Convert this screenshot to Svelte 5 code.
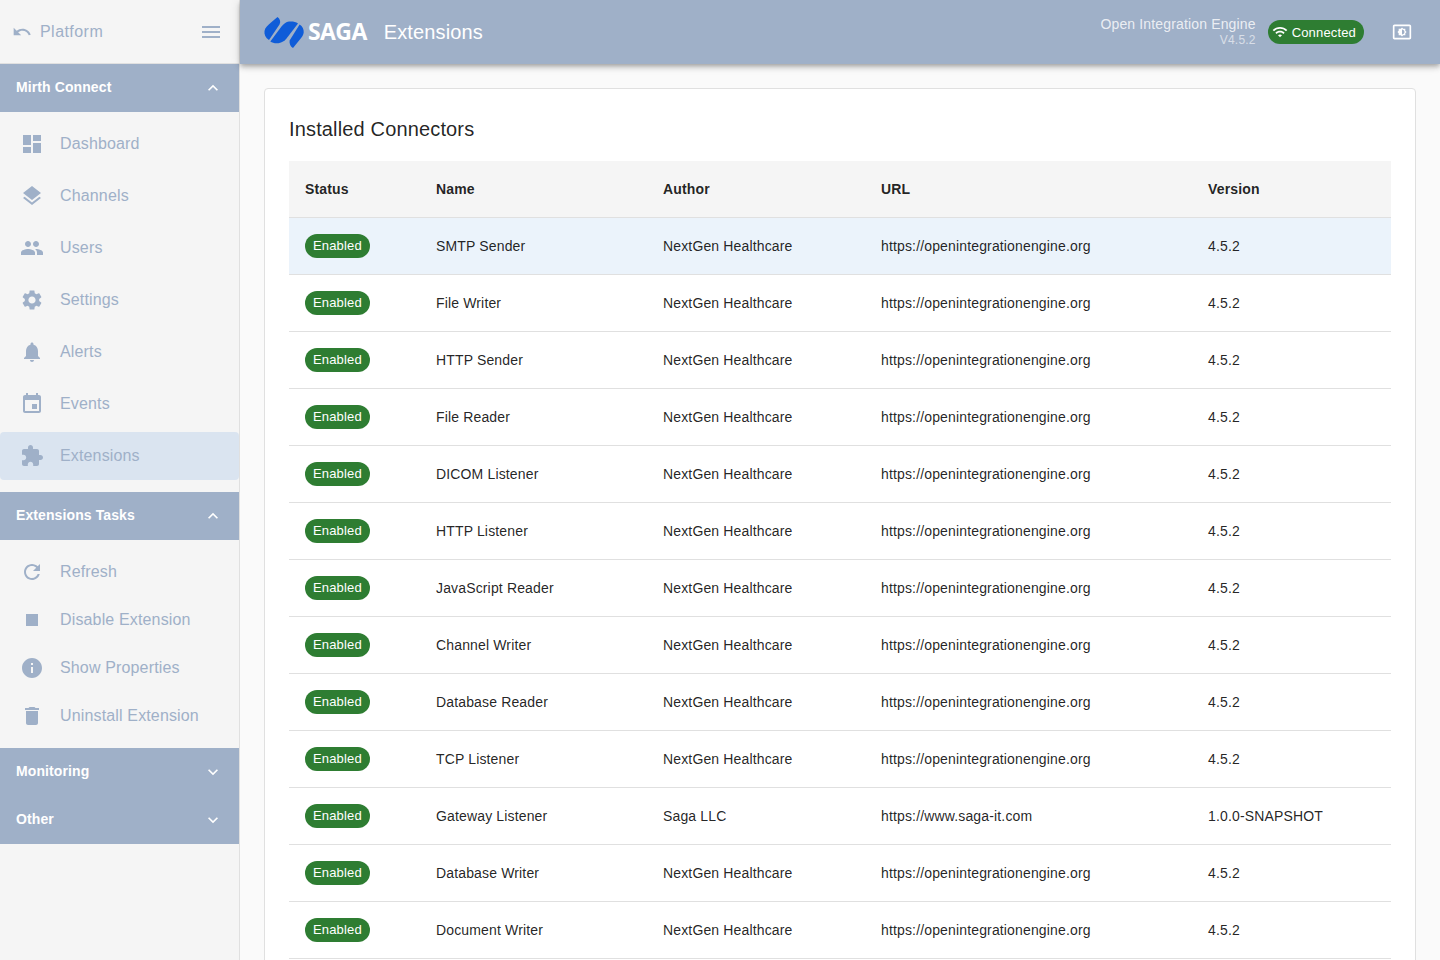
<script>
  const icons = {
    dashboard: 'M3 13h8V3H3v10zm0 8h8v-6H3v6zm10 0h8V11h-8v10zm0-18v6h8V3h-8z',
    layers: 'M11.99 18.54l-7.37-5.73L3 14.07l9 7 9-7-1.63-1.27-7.38 5.74zM12 16l7.36-5.73L21 9l-9-7-9 7 1.63 1.27L12 16z',
    people: 'M16 11c1.66 0 2.99-1.34 2.99-3S17.66 5 16 5c-1.66 0-3 1.34-3 3s1.34 3 3 3zm-8 0c1.66 0 2.99-1.34 2.99-3S9.66 5 8 5C6.34 5 5 6.34 5 8s1.34 3 3 3zm0 2c-2.33 0-7 1.17-7 3.5V19h14v-2.5c0-2.33-4.67-3.5-7-3.5zm8 0c-.29 0-.62.02-.97.05 1.16.84 1.97 1.97 1.97 3.45V19h6v-2.5c0-2.33-4.67-3.5-7-3.5z',
    settings: 'M19.14 12.94c.04-.3.06-.61.06-.94 0-.32-.02-.64-.07-.94l2.03-1.58c.18-.14.23-.41.12-.61l-1.92-3.32c-.12-.22-.37-.29-.59-.22l-2.39.96c-.5-.38-1.03-.7-1.62-.94l-.36-2.54c-.04-.24-.24-.41-.48-.41h-3.84c-.24 0-.43.17-.47.41l-.36 2.54c-.59.24-1.13.57-1.62.94l-2.39-.96c-.22-.08-.47 0-.59.22L2.74 8.87c-.12.21-.08.47.12.61l2.03 1.58c-.05.3-.09.63-.09.94s.02.64.07.94l-2.03 1.58c-.18.14-.23.41-.12.61l1.92 3.32c.12.22.37.29.59.22l2.39-.96c.5.38 1.03.7 1.62.94l.36 2.54c.05.24.24.41.48.41h3.84c.24 0 .44-.17.47-.41l.36-2.54c.59-.24 1.13-.56 1.62-.94l2.39.96c.22.08.47 0 .59-.22l1.92-3.32c.12-.22.07-.47-.12-.61l-2.01-1.58zM12 15.6c-1.98 0-3.6-1.62-3.6-3.6s1.62-3.6 3.6-3.6 3.6 1.62 3.6 3.6-1.62 3.6-3.6 3.6z',
    bell: 'M12 22c1.1 0 2-.9 2-2h-4c0 1.1.89 2 2 2zm6-6v-5c0-3.07-1.64-5.64-4.5-6.32V4c0-.83-.67-1.5-1.5-1.5s-1.5.67-1.5 1.5v.68C7.63 5.36 6 7.92 6 11v5l-2 2v1h16v-1l-2-2z',
    event: 'M17 12h-5v5h5v-5zM16 1v2H8V1H6v2H5c-1.11 0-1.99.9-1.99 2L3 19c0 1.1.89 2 2 2h14c1.1 0 2-.9 2-2V5c0-1.1-.9-2-2-2h-1V1h-2zm3 18H5V8h14v11z',
    extension: 'M20.5 11H19V7c0-1.1-.9-2-2-2h-4V3.5C13 2.12 11.88 1 10.5 1S8 2.12 8 3.5V5H4c-1.1 0-1.99.9-1.99 2v3.8H3.5c1.49 0 2.7 1.21 2.7 2.7s-1.21 2.7-2.7 2.7H2V20c0 1.1.9 2 2 2h3.8v-1.5c0-1.49 1.21-2.7 2.7-2.7 1.49 0 2.7 1.21 2.7 2.7V22H17c1.1 0 2-.9 2-2v-4h1.5c1.38 0 2.5-1.12 2.5-2.5S21.88 11 20.5 11z',
    refresh: 'M17.65 6.35C16.2 4.9 14.21 4 12 4c-4.42 0-7.99 3.58-7.99 8s3.57 8 7.99 8c3.73 0 6.84-2.55 7.73-6h-2.08c-.82 2.33-3.04 4-5.65 4-3.31 0-6-2.69-6-6s2.69-6 6-6c1.66 0 3.14.69 4.22 1.78L13 11h7V4l-2.35 2.35z',
    stop: 'M6 6h12v12H6z',
    info: 'M12 2C6.48 2 2 6.48 2 12s4.48 10 10 10 10-4.48 10-10S17.52 2 12 2zm1 15h-2v-6h2v6zm0-8h-2V7h2v2z',
    trash: 'M6 19c0 1.1.9 2 2 2h8c1.1 0 2-.9 2-2V7H6v12zM19 4h-3.5l-1-1h-5l-1 1H5v2h14V4z'
  };

  const mirthItems = [
    { label: 'Dashboard', icon: 'dashboard' },
    { label: 'Channels', icon: 'layers' },
    { label: 'Users', icon: 'people' },
    { label: 'Settings', icon: 'settings' },
    { label: 'Alerts', icon: 'bell' },
    { label: 'Events', icon: 'event' },
    { label: 'Extensions', icon: 'extension', active: true }
  ];

  const taskItems = [
    { label: 'Refresh', icon: 'refresh' },
    { label: 'Disable Extension', icon: 'stop' },
    { label: 'Show Properties', icon: 'info' },
    { label: 'Uninstall Extension', icon: 'trash' }
  ];

  const oie = 'https://openintegrationengine.org';
  const connectors = [
    { name: 'SMTP Sender', selected: true },
    { name: 'File Writer' },
    { name: 'HTTP Sender' },
    { name: 'File Reader' },
    { name: 'DICOM Listener' },
    { name: 'HTTP Listener' },
    { name: 'JavaScript Reader' },
    { name: 'Channel Writer' },
    { name: 'Database Reader' },
    { name: 'TCP Listener' },
    { name: 'Gateway Listener', author: 'Saga LLC', url: 'https://www.saga-it.com', version: '1.0.0-SNAPSHOT' },
    { name: 'Database Writer' },
    { name: 'Document Writer' }
  ];
</script>

{#snippet chevron(up)}
  <svg class="chevron" viewBox="0 0 24 24" width="20" height="20">
    <path fill="currentColor" d={up ? 'M12 8l-6 6 1.41 1.41L12 10.83l4.59 4.58L18 14z' : 'M16.59 8.59L12 13.17 7.41 8.59 6 10l6 6 6-6z'} />
  </svg>
{/snippet}

{#snippet navItem(item, spaced)}
  <div class="nav-item" class:nav-item--spaced={spaced} class:nav-item--active={item.active}>
    <svg class="nav-item__icon" viewBox="0 0 24 24" width="24" height="24">
      <path fill="currentColor" d={icons[item.icon]} />
    </svg>
    <span>{item.label}</span>
  </div>
{/snippet}

<div class="shell">
  <aside class="sidebar">
    <div class="sidebar__top">
      <div class="platform">
        <svg viewBox="0 0 24 24" width="20" height="20">
          <path fill="currentColor" d="M12.5 8c-2.65 0-5.05.99-6.9 2.6L2 7v9h9l-3.62-3.62c1.39-1.16 3.16-1.88 5.12-1.88 3.54 0 6.55 2.31 7.6 5.5l2.37-.78C21.08 11.03 17.15 8 12.5 8z" />
        </svg>
        <span>Platform</span>
      </div>
      <svg class="menu" viewBox="0 0 24 24" width="24" height="24">
        <path fill="currentColor" d="M3 18h18v-2H3v2zm0-5h18v-2H3v2zm0-7v2h18V6H3z" />
      </svg>
    </div>

    <div class="group-head"><span>Mirth Connect</span> {@render chevron(true)}</div>
    <div class="group-body">
      {#each mirthItems as item}
        {@render navItem(item, true)}
      {/each}
    </div>

    <div class="group-head"><span>Extensions Tasks</span> {@render chevron(true)}</div>
    <div class="group-body">
      {#each taskItems as item}
        {@render navItem(item, false)}
      {/each}
    </div>

    <div class="group-head"><span>Monitoring</span> {@render chevron(false)}</div>
    <div class="group-head"><span>Other</span> {@render chevron(false)}</div>
  </aside>

  <div class="main">
    <header class="topbar">
      <div class="brand">
        <svg class="brand__mark" viewBox="0 0 40 31" width="40" height="31">
          <path fill="#0f5cd8" d="M13.5 0 C16 2 17 4.5 15.5 7.5 L5 23 C1.5 21 0 17.5 0.5 14 C1 10.5 4 8 7 5.5 Z" />
          <path fill="#0f5cd8" d="M6.3 24.6 L17.5 9.5 C19.5 7 22 5 25 4.6 C28.5 4.2 31.5 4.8 34 6.4 L22.5 21.5 C20.5 24 18 25.6 14.5 26.2 C11.5 26.7 8.5 26 6.3 24.6 Z" />
          <path fill="#0f5cd8" d="M35.6 7.6 C38.5 9.5 40 12.5 39.7 15.5 C39.4 18 38 20 36.3 22 L29 31 C26.5 29.5 25.2 26.5 25.6 23.4 Z" />
        </svg>
        <span class="brand__saga">SAGA</span>
        <span class="brand__page">Extensions</span>
      </div>
      <div class="engine">
        <div class="engine__name">Open Integration Engine</div>
        <div class="engine__version">V4.5.2</div>
      </div>
      <div class="connected">
        <svg viewBox="0 0 24 24" width="16" height="16">
          <path fill="currentColor" d="M1 9l2 2c4.97-4.97 13.03-4.97 18 0l2-2C16.93 2.93 7.08 2.93 1 9zm8 8l3 3 3-3c-1.65-1.66-4.34-1.66-6 0zm-4-4l2 2c2.76-2.76 7.24-2.76 10 0l2-2C15.14 9.14 8.87 9.14 5 13z" />
        </svg>
        <span>Connected</span>
      </div>
      <svg class="theme" viewBox="0 0 24 24" width="20" height="20">
        <path fill="currentColor" d="M21 3H3c-1.1 0-2 .9-2 2v14c0 1.1.9 2 2 2h18c1.1 0 2-.9 2-2V5c0-1.1-.9-2-2-2zm0 16.01H3V4.99h18v14.02zM8 16h2.5l1.5 1.5 1.5-1.5H16v-2.5l1.5-1.5-1.5-1.5V8h-2.5L12 6.5 10.5 8H8v2.5L6.5 12 8 13.5V16zm4-7c1.66 0 3 1.34 3 3s-1.34 3-3 3V9z" />
      </svg>
    </header>

    <main class="content">
      <section class="card">
        <h2 class="card__title">Installed Connectors</h2>
        <table class="table">
          <colgroup>
            <col style="width: 131px" />
            <col style="width: 227px" />
            <col style="width: 218px" />
            <col style="width: 327px" />
            <col />
          </colgroup>
          <thead>
            <tr>
              <th>Status</th>
              <th>Name</th>
              <th>Author</th>
              <th>URL</th>
              <th>Version</th>
            </tr>
          </thead>
          <tbody>
            {#each connectors as row}
              <tr class:selected={row.selected}>
                <td><span class="chip">Enabled</span></td>
                <td>{row.name}</td>
                <td>{row.author ?? 'NextGen Healthcare'}</td>
                <td>{row.url ?? oie}</td>
                <td>{row.version ?? '4.5.2'}</td>
              </tr>
            {/each}
          </tbody>
        </table>
      </section>
    </main>
  </div>
</div>

<style>
  :global(body) {
    margin: 0;
    overflow: hidden;
  }

  .shell {
    display: flex;
    height: 960px;
    overflow: hidden;
    font-family: "Liberation Sans", Arial, sans-serif;
    color: rgba(0, 0, 0, 0.87);
  }

  .sidebar {
    width: 239px;
    flex-shrink: 0;
    background: #f5f5f5;
    border-right: 1px solid #e0e0e0;
  }

  .sidebar__top {
    height: 63px;
    display: flex;
    align-items: center;
    justify-content: space-between;
    padding: 0 16px 0 12px;
    border-bottom: 1px solid #e0e0e0;
    color: #9fb0c8;
  }

  .platform {
    display: flex;
    align-items: center;
    gap: 8px;
    font-size: 16px;
    letter-spacing: 0.45px;
  }

  .group-head {
    height: 48px;
    display: flex;
    align-items: center;
    justify-content: space-between;
    padding: 0 16px;
    background: #9fb0c8;
    color: #fff;
    font-size: 14px;
    font-weight: 700;
    letter-spacing: 0.1px;
  }

  .group-head span {
    margin-top: -2px;
  }

  .group-body {
    padding: 8px 0;
  }

  .nav-item {
    height: 48px;
    display: flex;
    align-items: center;
    gap: 16px;
    padding-left: 20px;
    color: #9fb0c8;
    font-size: 16px;
    letter-spacing: 0.15px;
  }

  .nav-item--spaced {
    margin-bottom: 4px;
  }

  .nav-item--active {
    background: #dae4f0;
    border-radius: 4px;
  }

  .nav-item__icon {
    flex-shrink: 0;
  }

  .main {
    flex: 1;
    min-width: 0;
    background: #fafafa;
    display: flex;
    flex-direction: column;
  }

  .topbar {
    height: 64px;
    flex-shrink: 0;
    display: flex;
    align-items: center;
    padding: 0 28px 0 24px;
    background: #9fb0c8;
    color: #fff;
    box-shadow: 0 2px 4px -1px rgba(0, 0, 0, 0.2), 0 4px 5px rgba(0, 0, 0, 0.14), 0 1px 10px rgba(0, 0, 0, 0.12);
    position: relative;
  }

  .brand {
    display: flex;
    align-items: center;
    margin-right: auto;
  }

  .brand__saga {
    margin-left: 4px;
    margin-top: -2px;
    font-family: "Open Sans", sans-serif;
    font-size: 23px;
    font-weight: 700;
    letter-spacing: -0.6px;
  }

  .brand__page {
    margin-left: 17px;
    font-size: 20px;
    letter-spacing: 0.15px;
  }

  .engine {
    text-align: right;
    margin-right: 12px;
    line-height: 16px;
    margin-top: -1px;
  }

  .engine__name {
    font-size: 14px;
    color: rgba(255, 255, 255, 0.8);
    letter-spacing: 0.15px;
  }

  .engine__version {
    font-size: 12px;
    color: rgba(255, 255, 255, 0.6);
    letter-spacing: 0.2px;
  }

  .connected {
    display: flex;
    align-items: center;
    gap: 4px;
    height: 24px;
    padding: 0 8px 0 4px;
    border-radius: 12px;
    background: #2e7d32;
    font-size: 13px;
    letter-spacing: 0.16px;
    margin-right: 28px;
  }

  .content {
    flex: 1;
    padding: 24px;
    min-height: 0;
  }

  .card {
    background: #fff;
    border: 1px solid #e0e0e0;
    border-radius: 4px;
    padding: 24px;
  }

  .card__title {
    margin: 4px 0 20px;
    font-size: 20px;
    font-weight: 400;
    line-height: 24px;
    letter-spacing: 0.15px;
  }

  .table {
    width: 100%;
    border-collapse: collapse;
    table-layout: fixed;
    font-size: 14px;
    letter-spacing: 0.15px;
  }

  .table th {
    height: 56px;
    padding: 0 16px;
    text-align: left;
    font-weight: 700;
    background: #f5f5f5;
    border-bottom: 1px solid #e0e0e0;
  }

  .table td {
    height: 56px;
    padding: 0 16px;
    border-bottom: 1px solid #e0e0e0;
  }

  .selected td {
    background: #ebf3fb;
  }

  .chip {
    display: inline-flex;
    align-items: center;
    box-sizing: border-box;
    height: 24px;
    padding: 0 8px 2px;
    border-radius: 12px;
    background: #2e7d32;
    color: #fff;
    font-size: 13px;
    letter-spacing: 0.16px;
    vertical-align: middle;
  }
</style>
